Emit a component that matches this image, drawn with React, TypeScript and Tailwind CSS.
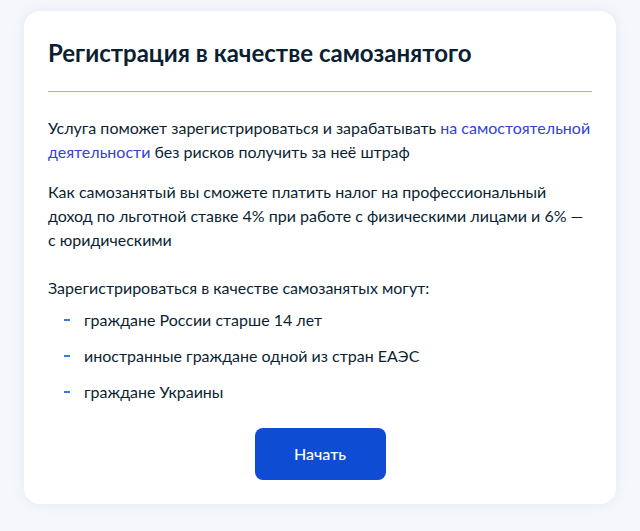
import React from 'react';

const items = [
  'граждане России старше 14 лет',
  'иностранные граждане одной из стран ЕАЭС',
  'граждане Украины',
];

const App: React.FC = () => {
  return (
    <div
      className="min-h-[531px] w-[640px] bg-[#f5f7fb] px-6 pt-[11px] pb-7 text-[#0b1f33]"
      style={{ fontFamily: 'Lato, "Noto Sans", sans-serif' }}
    >
      <div className="rounded-2xl bg-white px-6 pt-6 pb-6 shadow-[0_0_12px_rgba(180,195,230,0.25)]">
        <h1 className="text-[24px] font-bold leading-[32px] pt-[2px]">Регистрация в качестве самозанятого</h1>
        <div className="mt-[22px] h-px bg-[#a6b3d9]" />

        <div className="mt-6 text-[16px] leading-6">
          <p>
            Услуга поможет зарегистрироваться и зарабатывать{' '}
            <a className="text-[#3342d4]">на самостоятельной деятельности</a> без рисков получить за неё штраф
          </p>
          <p className="mt-4">
            Как самозанятый вы сможете платить налог на профессиональный доход по льготной ставке 4% при работе с физическими лицами и 6% — с юридическими
          </p>
          <p className="mt-6">Зарегистрироваться в качестве самозанятых могут:</p>
          <ul className="mt-2 flex flex-col gap-3">
            {items.map((t) => (
              <li key={t} className="flex items-center">
                <span className="ml-4 mr-[14px] h-[2px] w-[6px] bg-[#3b78ee]" />
                {t}
              </li>
            ))}
          </ul>
        </div>

        <div className="mt-6 flex justify-center">
          <button className="h-[52px] w-[131px] rounded-lg bg-[#0d4cd3] text-[16px] font-medium text-white">
            Начать
          </button>
        </div>
      </div>
    </div>
  );
};

export default App;
